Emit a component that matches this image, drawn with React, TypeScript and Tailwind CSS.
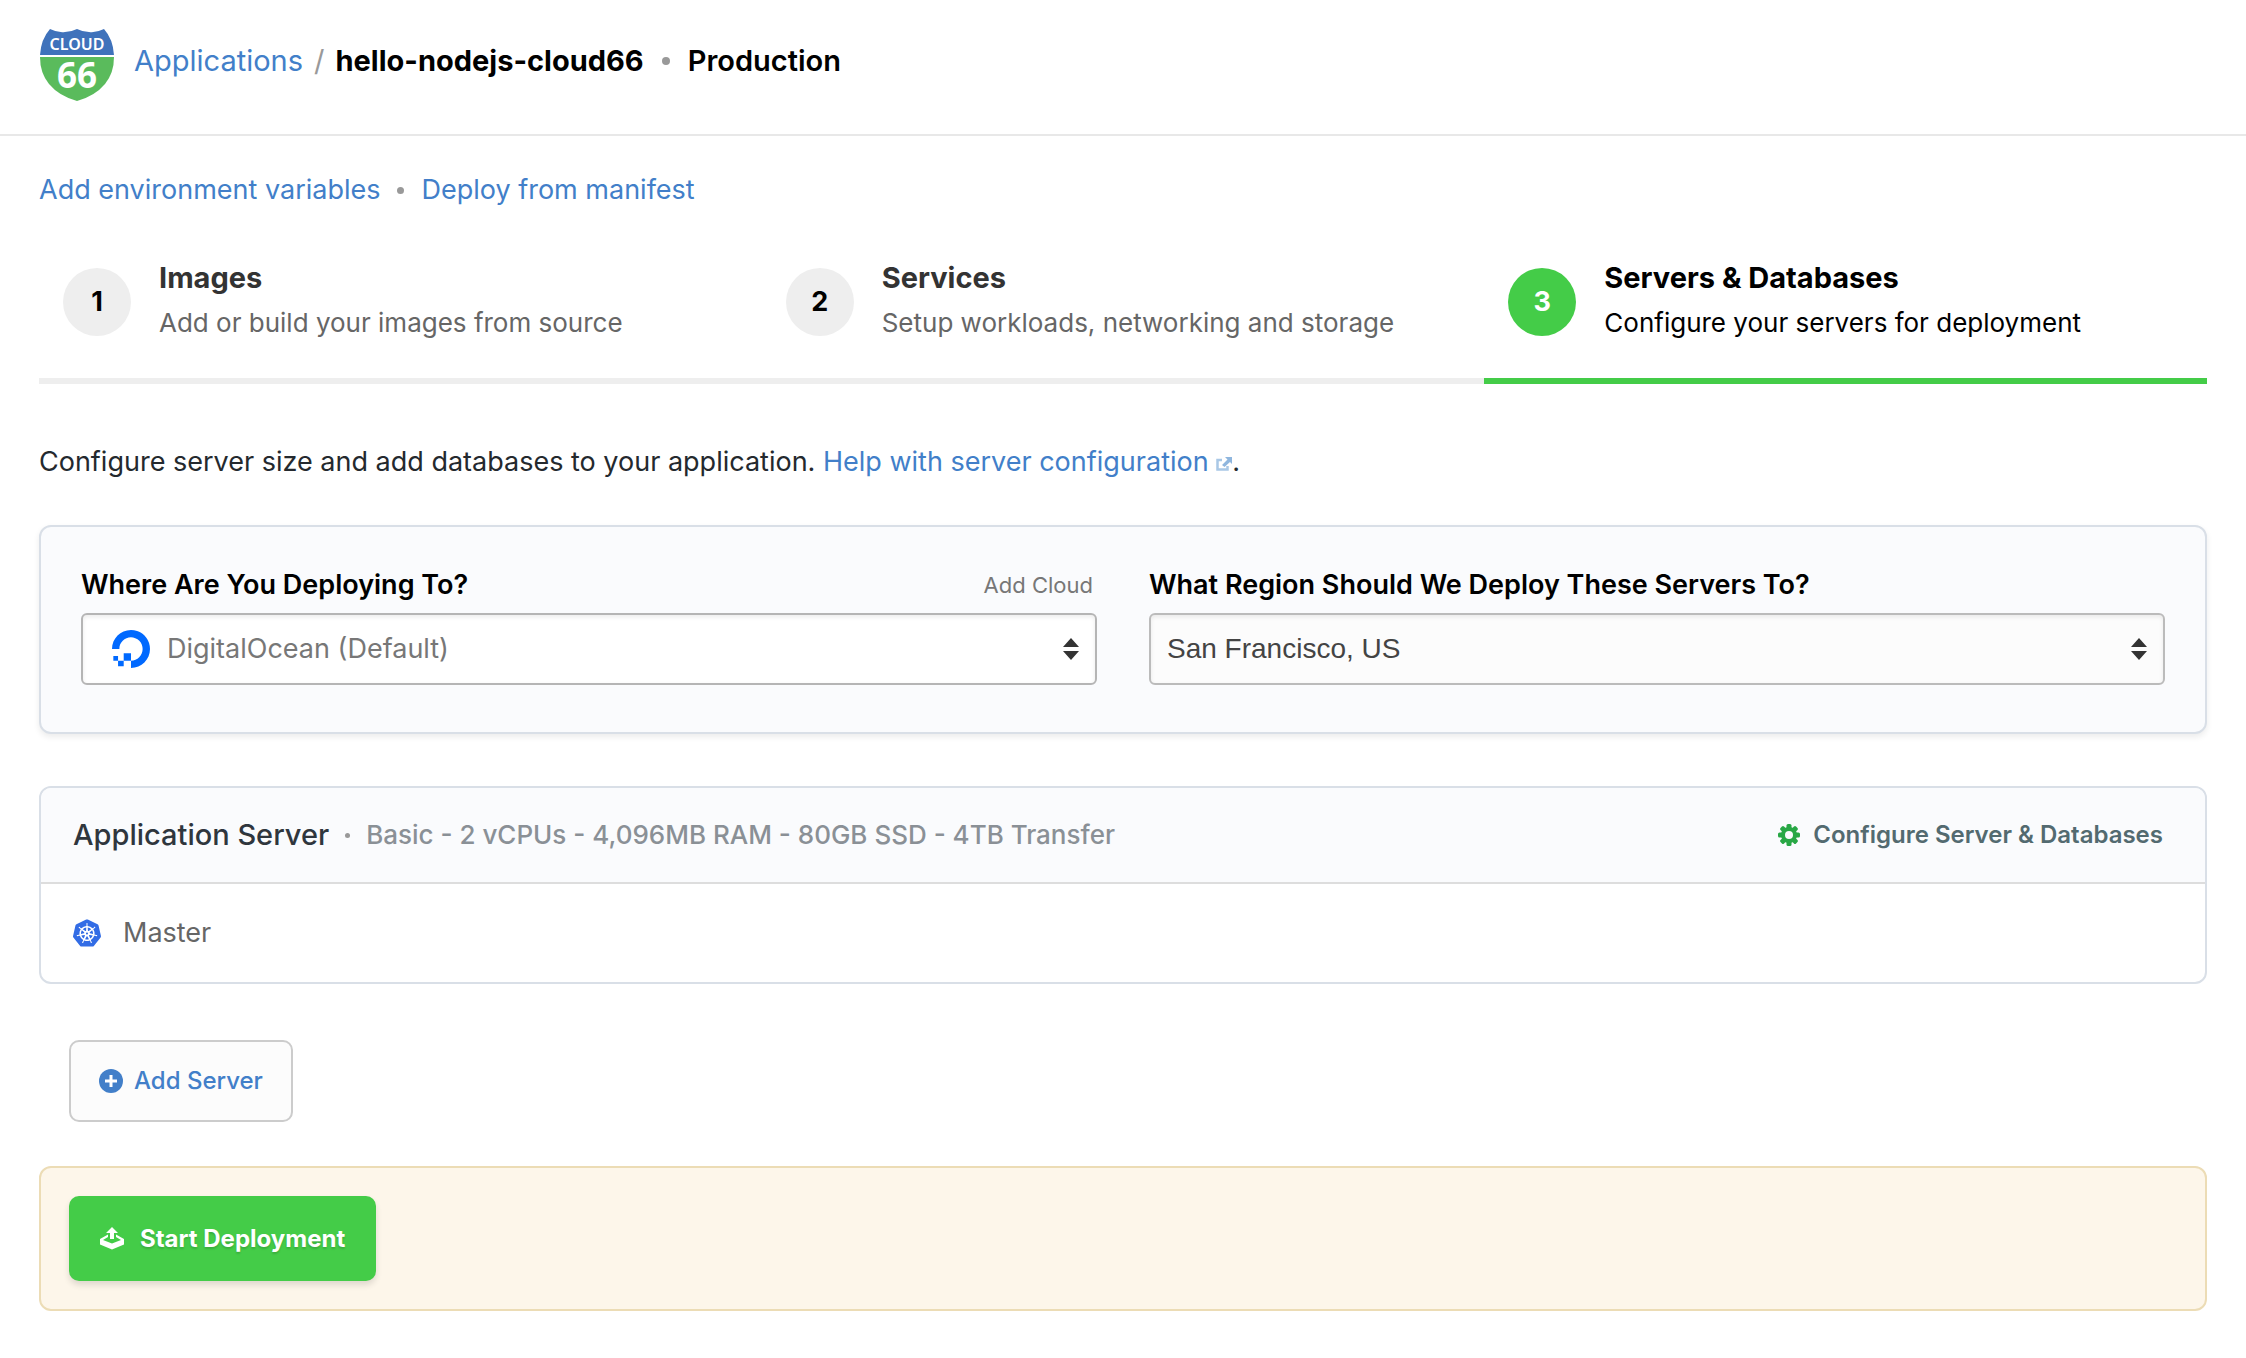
import { SiDigitalocean, SiKubernetes } from "react-icons/si";

const steps = [
  { n: 1, title: "Images", text: "Add or build your images from source", active: false },
  { n: 2, title: "Services", text: "Setup workloads, networking and storage", active: false },
  { n: 3, title: "Servers & Databases", text: "Configure your servers for deployment", active: true },
];

function Logo() {
  return (
    <svg viewBox="0 0 74 72" className="h-[72px] w-[74px] shrink-0" role="img" aria-label="Cloud 66">
      <path d="M10 0 Q18 4 25 3 Q31 3 37 0 Q43 3 49 3 Q56 4 64 0 Q73 10 74 26 H0 Q1 10 10 0Z" fill="#3f72bb" />
      <path d="M0 28 H74 Q74 44 65 55 Q55 67 37 72 Q19 67 9 55 Q0 44 0 28Z" fill="#5abb5c" />
      <text x="37" y="21" textAnchor="middle" fontFamily="Noto Sans, sans-serif" fontWeight="600" fontSize="16" fill="#fff">CLOUD</text>
      <text x="37" y="59" textAnchor="middle" fontFamily="Open Sans, sans-serif" fontWeight="700" fontSize="35" fill="#fff">66</text>
    </svg>
  );
}

function Sorter() {
  return (
    <svg viewBox="0 0 16 22" className="pointer-events-none absolute top-1/2 right-[18px] h-[22px] w-4 -translate-y-1/2" aria-hidden="true">
      <path d="M8 0 16 9H0ZM8 22 0 13H16Z" fill="#333" />
    </svg>
  );
}

function Gear() {
  return (
    <svg viewBox="0 0 22 22" className="size-[22px]" aria-hidden="true">
      <g fill="#28a745">
        {[0, 45, 90, 135].map((a) => (
          <rect key={a} x="8.500" y="0" width="5" height="22" rx="1.500" transform={`rotate(${a} 11 11)`} />
        ))}
        <circle cx="11" cy="11" r="8" />
      </g>
      <circle cx="11" cy="11" r="4" fill="#fafbfd" />
    </svg>
  );
}

export default function App() {
  return (
    <div className="min-h-screen bg-white font-['Inter',sans-serif] text-[27px] leading-10 text-[#24292e]">
      <header className="flex h-[136px] items-start gap-5 border-b-2 border-[#e8e8e8] px-10 pt-[29px]">
        <Logo />
        <nav aria-label="Breadcrumb" className="mt-3 flex items-center text-[29px] leading-10 text-black">
          <a href="#applications" className="text-[#427fc9]">Applications</a>
          <span className="mx-[11px] text-[#999]">/</span>
          <span className="font-bold">hello-nodejs-cloud66</span>
          <span className="mx-[18px] size-2 rounded-full bg-[#999]" />
          <span className="font-semibold">Production</span>
        </nav>
      </header>

      <main className="px-[39px] pt-[34px]">
        <div className="flex items-center text-[#427fc9]">
          <a href="#env">Add environment variables</a>
          <span className="mx-[17px] size-[7px] rounded-full bg-[#999]" />
          <a href="#manifest">Deploy from manifest</a>
        </div>

        <ol className="mt-[46px] grid grid-cols-3">
          {steps.map((s) => (
            <li
              key={s.n}
              className={`flex h-[128px] items-start gap-7 border-b-6 pl-6 ${s.active ? "border-[#44cc48] text-black" : "border-[#eee] text-[#333]"}`}
            >
              <span
                className={`mt-3 flex size-[68px] shrink-0 items-center justify-center rounded-full font-bold ${s.active ? "bg-[#44cc48] text-white" : "bg-[#eee] text-black"}`}
              >
                {s.n}
              </span>
              <div>
                <h2 className="text-[29px] leading-[44px] font-bold">{s.title}</h2>
                <p className={`text-[26px] leading-[46px] ${s.active ? "text-black" : "text-[#666]"}`}>{s.text}</p>
              </div>
            </li>
          ))}
        </ol>

        <p className="mt-[58px]">
          Configure server size and add databases to your application.{" "}
          <a href="#help" className="text-[#427fc9]">
            Help with server configuration{" "}
            <svg viewBox="0 0 16 14" className="inline h-3.5 w-4" aria-hidden="true">
              <path d="M6 3H1.500V12.500H11.500V9" fill="none" stroke="#a9c8e6" strokeWidth="2.500" />
              <path d="M9 0H16V7L14 5 8.500 10 6 8 11.500 2.500Z" fill="#8fb6de" />
            </svg>
          </a>
          .
        </p>

        <section className="mt-[43px] grid grid-cols-2 gap-x-[52px] rounded-xl border-2 border-[#d9dfe7] bg-[#fafbfd] px-10 pt-[38px] pb-[47px] shadow-[0_3px_6px_rgba(0,0,0,0.08)]">
          <div>
            <div className="flex h-12 items-start justify-between pr-1">
              <label htmlFor="cloud" className="font-semibold text-black">Where Are You Deploying To?</label>
              <a href="#add-cloud" className="text-[22px] text-[#777]">Add Cloud</a>
            </div>
            <div className="relative">
              <select id="cloud" className="block h-[72px] w-full appearance-none rounded-md border-2 border-[#b5b5b5] bg-white pl-[84px] text-[#777] shadow-[inset_0_2px_4px_rgba(0,0,0,0.08)]">
                <option>DigitalOcean (Default)</option>
              </select>
              <SiDigitalocean className="pointer-events-none absolute top-1/2 left-[31px] size-[38px] -translate-y-1/2 text-[#0069ff]" />
              <Sorter />
            </div>
          </div>
          <div>
            <div className="flex h-12 items-start">
              <label htmlFor="region" className="font-semibold text-black">What Region Should We Deploy These Servers To?</label>
            </div>
            <div className="relative">
              <select id="region" className="block h-[72px] w-full appearance-none rounded-md border-2 border-[#bbb] bg-[#fcfcfc] pl-4 font-['Liberation_Sans',sans-serif] text-[28px] text-[#444] shadow-[inset_0_2px_4px_rgba(0,0,0,0.08)]">
                <option>San Francisco, US</option>
              </select>
              <Sorter />
            </div>
          </div>
        </section>

        <section className="mt-[52px] overflow-hidden rounded-xl border-2 border-[#d9dfe7]">
          <div className="flex h-24 items-center justify-between border-b-2 border-[#ddd] bg-[#fafbfd] pr-[42px] pl-8">
            <div className="flex items-center">
              <h3 className="text-[29px] font-medium text-[#2f363d]">Application Server</h3>
              <span className="mx-4 size-[5px] rounded-full bg-[#999]" />
              <span className="text-[26px] font-medium text-[#8a9096]">Basic - 2 vCPUs - 4,096MB RAM - 80GB SSD - 4TB Transfer</span>
            </div>
            <button type="button" className="flex items-center gap-[13px] text-[24px] font-semibold text-[#536a70]">
              <Gear />
              Configure Server &amp; Databases
            </button>
          </div>
          <div className="flex h-[98px] items-center gap-[22px] pl-8 text-[#666]">
            <SiKubernetes className="size-7 text-[#326ce5]" />
            Master
          </div>
        </section>

        <button type="button" className="mt-14 ml-[30px] flex h-[82px] items-center gap-[11px] rounded-[10px] border-2 border-[#ccc] bg-[#fcfcfc] px-7 text-[24px] font-medium text-[#427fc9]">
          <svg viewBox="0 0 24 24" className="size-6" aria-hidden="true">
            <circle cx="12" cy="12" r="12" fill="#427fc9" />
            <path d="M12 6V18M6 12H18" stroke="#fff" strokeWidth="3" />
          </svg>
          Add Server
        </button>

        <section className="mt-11 rounded-xl border-2 border-[#ecdcb5] bg-[#fdf6ea] p-7">
          <button type="button" className="flex h-[85px] items-center gap-4 rounded-[10px] bg-[#44cc48] px-[31px] text-[24px] font-bold text-white shadow-[0_4px_6px_rgba(0,0,0,0.12)] text-shadow-[0_2px_2px_rgba(0,0,0,0.15)]">
            <svg viewBox="0 0 24 23" className="h-[23px] w-6" fill="#fff" aria-hidden="true">
              <path d="M12 0 18 6H14V12H10V6H6Z" />
              <path d="M8 7.500V10L3 13 12 16.500 21 13 16 10V7.500L24 12V17.500L12 22.500 0 17.500V12Z" fillRule="evenodd" />
            </svg>
            Start Deployment
          </button>
        </section>
      </main>
    </div>
  );
}
